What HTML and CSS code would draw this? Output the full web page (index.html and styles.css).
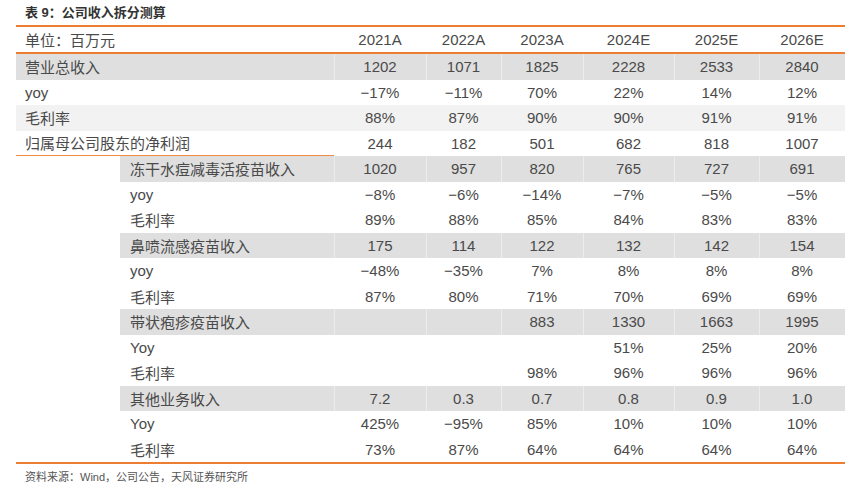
FILE: index.html
```html
<!DOCTYPE html>
<html lang="zh-CN">
<head>
<meta charset="utf-8">
<title>表 9：公司收入拆分测算</title>
<link rel="stylesheet" href="styles.css">
</head>
<body>
<div class="page">
  <div class="title">表 9：公司收入拆分测算</div>
  <table class="tbl">
    <colgroup>
      <col class="c-sp"><col class="c-lab">
      <col class="c1"><col class="c2"><col class="c3"><col class="c4"><col class="c5"><col class="c6">
    </colgroup>
    <thead>
      <tr>
        <th colspan="2" class="lab">单位：百万元</th>
        <th>2021A</th><th>2022A</th><th>2023A</th><th>2024E</th><th>2025E</th><th>2026E</th>
      </tr>
    </thead>
    <tbody>
      <tr class="gray">
        <td colspan="2" class="lab">营业总收入</td>
        <td>1202</td><td>1071</td><td>1825</td><td>2228</td><td>2533</td><td>2840</td>
      </tr>
      <tr>
        <td colspan="2" class="lab">yoy</td>
        <td>−17%</td><td>−11%</td><td>70%</td><td>22%</td><td>14%</td><td>12%</td>
      </tr>
      <tr class="light">
        <td colspan="2" class="lab">毛利率</td>
        <td>88%</td><td>87%</td><td>90%</td><td>90%</td><td>91%</td><td>91%</td>
      </tr>
      <tr>
        <td colspan="2" class="lab underline">归属母公司股东的净利润</td>
        <td>244</td><td>182</td><td>501</td><td>682</td><td>818</td><td>1007</td>
      </tr>

      <tr class="gray sub">
        <td class="sp"></td><td class="lab">冻干水痘减毒活疫苗收入</td>
        <td>1020</td><td>957</td><td>820</td><td>765</td><td>727</td><td>691</td>
      </tr>
      <tr class="sub">
        <td class="sp"></td><td class="lab">yoy</td>
        <td>−8%</td><td>−6%</td><td>−14%</td><td>−7%</td><td>−5%</td><td>−5%</td>
      </tr>
      <tr class="sub">
        <td class="sp"></td><td class="lab">毛利率</td>
        <td>89%</td><td>88%</td><td>85%</td><td>84%</td><td>83%</td><td>83%</td>
      </tr>

      <tr class="gray sub">
        <td class="sp"></td><td class="lab">鼻喷流感疫苗收入</td>
        <td>175</td><td>114</td><td>122</td><td>132</td><td>142</td><td>154</td>
      </tr>
      <tr class="sub">
        <td class="sp"></td><td class="lab">yoy</td>
        <td>−48%</td><td>−35%</td><td>7%</td><td>8%</td><td>8%</td><td>8%</td>
      </tr>
      <tr class="sub">
        <td class="sp"></td><td class="lab">毛利率</td>
        <td>87%</td><td>80%</td><td>71%</td><td>70%</td><td>69%</td><td>69%</td>
      </tr>

      <tr class="gray sub">
        <td class="sp"></td><td class="lab">带状疱疹疫苗收入</td>
        <td></td><td></td><td>883</td><td>1330</td><td>1663</td><td>1995</td>
      </tr>
      <tr class="sub">
        <td class="sp"></td><td class="lab">Yoy</td>
        <td></td><td></td><td></td><td>51%</td><td>25%</td><td>20%</td>
      </tr>
      <tr class="sub">
        <td class="sp"></td><td class="lab">毛利率</td>
        <td></td><td></td><td>98%</td><td>96%</td><td>96%</td><td>96%</td>
      </tr>

      <tr class="gray sub">
        <td class="sp"></td><td class="lab">其他业务收入</td>
        <td>7.2</td><td>0.3</td><td>0.7</td><td>0.8</td><td>0.9</td><td>1.0</td>
      </tr>
      <tr class="sub">
        <td class="sp"></td><td class="lab">Yoy</td>
        <td>425%</td><td>−95%</td><td>85%</td><td>10%</td><td>10%</td><td>10%</td>
      </tr>
      <tr class="sub last">
        <td class="sp"></td><td class="lab">毛利率</td>
        <td>73%</td><td>87%</td><td>64%</td><td>64%</td><td>64%</td><td>64%</td>
      </tr>
    </tbody>
  </table>
  <div class="source">资料来源：Wind，公司公告，天风证券研究所</div>
</div>
</body>
</html>
```

FILE: styles.css
```css
html, body {
  margin: 0;
  padding: 0;
  background: #ffffff;
}

body {
  font-family: "Liberation Sans", Arial, "Noto Sans CJK SC", sans-serif;
  color: #4a4a4a;
}

.page {
  padding: 0 16px;
}

.title {
  height: 25px;
  line-height: 25px;
  padding-left: 9px;
  font-size: 13px;
  font-weight: bold;
  color: #333333;
}

.tbl {
  border-collapse: separate;
  border-spacing: 0;
  table-layout: fixed;
  width: 829px;
  font-size: 15px;
}

.c-sp { width: 104px; }
.c-lab { width: 214px; }
.c1 { width: 92px; }
.c2 { width: 75px; }
.c3 { width: 82px; }
.c4 { width: 91px; }
.c5 { width: 85px; }
.c6 { width: 86px; }

.tbl th,
.tbl td {
  padding: 0;
  text-align: center;
  font-weight: normal;
  white-space: nowrap;
  color: #4a4a4a;
}

.tbl th {
  height: 25px;
  border-top: 2px solid #ed7d31;
  border-bottom: 2px solid #ed7d31;
}

.tbl td {
  height: 25.5px;
}

.tbl .lab {
  text-align: left;
  padding-left: 9px;
}

.tbl .sub .lab {
  padding-left: 10px;
}

.tbl .gray td {
  background: #dfdfdf;
  box-shadow: inset 1px 0 0 #ececec;
}

.tbl .gray td.lab {
  box-shadow: none;
}

.tbl .gray td.sp {
  background: transparent;
  box-shadow: none;
}

.tbl .light td {
  background: #f2f2f2;
}

.tbl td.underline {
  height: 24.5px;
  border-bottom: 1px solid #f08a45;
}

.tbl .last td {
  border-bottom: 2px solid #ed7d31;
}

.source {
  padding-left: 9px;
  margin-top: 5px;
  font-size: 11px;
  line-height: 16px;
  color: #555555;
}
```
